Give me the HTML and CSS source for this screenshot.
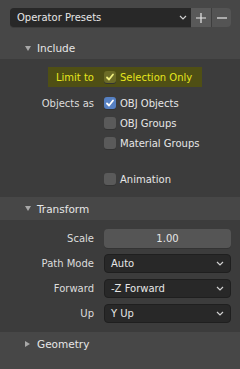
FILE: index.html
```html
<!DOCTYPE html>
<html lang="en">
<head>
    <meta charset="UTF-8">
    <meta name="viewport" content="width=device-width, initial-scale=1.0">
    <title>Export OBJ</title>
    <link rel="stylesheet" href="styles.css">
</head>
<body>
    <div class="presets">
        <div class="preset-menu">
            <span>Operator Presets</span>
            <svg class="chev" width="8" height="5" viewBox="0 0 8 5"><polyline points="1,1 4,4 7,1" /></svg>
        </div>
        <button class="preset-btn add"><svg width="10" height="10" viewBox="0 0 10 10"><path d="M5 0V10M0 5H10" /></svg></button>
        <button class="preset-btn remove"><svg width="10" height="10" viewBox="0 0 10 10"><path d="M0 5H10" /></svg></button>
    </div>

    <div class="panel-header"><span class="arrow-down"></span>Include</div>
    <div class="panel-body include">
        <div class="row highlight">
            <label>Limit to</label>
            <div class="check"><span class="box on-yellow"><svg width="12" height="12" viewBox="0 0 12 12"><polyline points="3,6.5 5,8.5 9,3.5" /></svg></span>Selection Only</div>
        </div>
        <div class="row first">
            <label>Objects as</label>
            <div class="check"><span class="box on"><svg width="12" height="12" viewBox="0 0 12 12"><polyline points="3,6.5 5,8.5 9,3.5" /></svg></span>OBJ Objects</div>
        </div>
        <div class="row">
            <label></label>
            <div class="check"><span class="box"></span>OBJ Groups</div>
        </div>
        <div class="row">
            <label></label>
            <div class="check"><span class="box"></span>Material Groups</div>
        </div>
        <div class="row spaced">
            <label></label>
            <div class="check"><span class="box"></span>Animation</div>
        </div>
    </div>

    <div class="panel-header"><span class="arrow-down"></span>Transform</div>
    <div class="panel-body transform">
        <div class="row field">
            <label>Scale</label>
            <div class="number">1.00</div>
        </div>
        <div class="row field">
            <label>Path Mode</label>
            <div class="select">Auto<svg class="chev" width="8" height="5" viewBox="0 0 8 5"><polyline points="1,1 4,4 7,1" /></svg></div>
        </div>
        <div class="row field">
            <label>Forward</label>
            <div class="select">-Z Forward<svg class="chev" width="8" height="5" viewBox="0 0 8 5"><polyline points="1,1 4,4 7,1" /></svg></div>
        </div>
        <div class="row field">
            <label>Up</label>
            <div class="select">Y Up<svg class="chev" width="8" height="5" viewBox="0 0 8 5"><polyline points="1,1 4,4 7,1" /></svg></div>
        </div>
    </div>

    <div class="panel-header closed"><span class="arrow-right"></span>Geometry</div>
</body>
</html>
```

FILE: styles.css
```css
body {
    margin: 0;
    background-color: #474747;
    font-family: "DejaVu Sans", sans-serif;
    font-size: 10px;
    color: #e6e6e6;
    height: 369px;
    overflow: hidden;
}
.presets {
    display: flex;
    padding: 8px 9px 10px 10px;
    height: 19px;
}
.preset-menu {
    flex: 1;
    display: flex;
    align-items: center;
    justify-content: space-between;
    background-color: #282828;
    border-radius: 4px 0 0 4px;
    padding: 0 4px 0 7px;
    box-shadow: 0 1px 0 #3c3c3c;
}
.chev polyline {
    fill: none;
    stroke: #d0d0d0;
    stroke-width: 1.2;
}
.preset-btn {
    width: 20px;
    height: 19px;
    border: none;
    padding: 0;
    display: flex;
    align-items: center;
    justify-content: center;
    background-color: #595959;
}
.preset-btn.remove {
    background-color: #545454;
    border-left: 1px solid #3e3e3e;
    border-radius: 0 4px 4px 0;
}
.preset-btn path {
    stroke: #e8e8e8;
    stroke-width: 1.2;
}
.panel-header {
    display: flex;
    align-items: center;
    height: 22px;
    padding-left: 25px;
    background-color: #474747;
    font-size: 10.5px;
}
.panel-header.closed {
    height: 25px;
}
.arrow-down {
    width: 0;
    height: 0;
    border-left: 3px solid transparent;
    border-right: 3px solid transparent;
    border-top: 5px solid #a8a8a8;
    margin-right: 6px;
}
.arrow-right {
    width: 0;
    height: 0;
    border-top: 3px solid transparent;
    border-bottom: 3px solid transparent;
    border-left: 5px solid #a8a8a8;
    margin-right: 7px;
}
.panel-body {
    background-color: #3c3c3c;
}
.include {
    padding: 8px 0 8px 0;
}
.transform {
    padding: 9px 0;
    display: flex;
    flex-direction: column;
    gap: 6px;
}
.panel-header + .panel-body + .panel-header {
    height: 23px;
}
.row {
    display: grid;
    grid-template-columns: 94px 1fr;
    column-gap: 10px;
    align-items: center;
    height: 20px;
    padding-right: 9px;
}
.row label {
    text-align: right;
    color: #dcdcdc;
}
.row.first {
    margin-top: 6px;
}
.row.spaced {
    margin-top: 16px;
}
.row.highlight {
    margin-left: 48px;
    width: 154px;
    grid-template-columns: 46px 1fr;
    padding-right: 0;
    background-color: #4f4f14;
    color: #e6e61e;
}
.row.highlight label {
    color: #e6e61e;
}
.check {
    display: flex;
    align-items: center;
    gap: 4px;
}
.box {
    width: 12px;
    height: 12px;
    border-radius: 3px;
    background-color: #5a5a5a;
    box-shadow: 0 1px 0 #333;
    display: flex;
}
.box polyline {
    fill: none;
    stroke: #ffffff;
    stroke-width: 1.8;
    stroke-linecap: round;
    stroke-linejoin: round;
}
.box.on {
    background-color: #5680c2;
}
.box.on-yellow {
    background-color: #6c6c26;
}
.box.on-yellow polyline {
    stroke: #f0f080;
}
.row.field {
    height: 19px;
}
.number {
    height: 19px;
    line-height: 19px;
    background-color: #555555;
    border-radius: 4px;
    text-align: center;
    box-shadow: 0 1px 0 #333;
}
.select {
    height: 17px;
    display: flex;
    align-items: center;
    justify-content: space-between;
    padding: 0 6px 0 6px;
    background-color: #282828;
    border: 1px solid #1f1f1f;
    border-radius: 4px;
}
```
